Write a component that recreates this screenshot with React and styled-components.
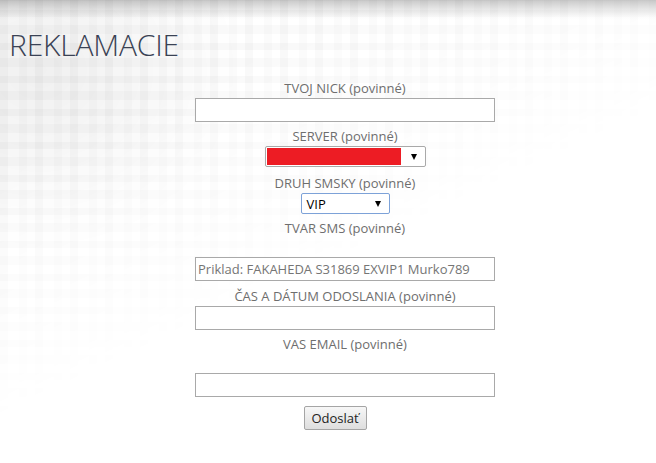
import React from 'react';
import styled, { createGlobalStyle } from 'styled-components';

const GlobalStyle = createGlobalStyle`
  html, body {
    margin: 0;
    padding: 0;
    background: #fff;
  }
  body {
    font-family: "Open Sans", "Liberation Sans", sans-serif;
  }
`;

const Page = styled.div`
  position: relative;
  width: 656px;
  height: 463px;
  overflow: hidden;
  background: linear-gradient(to bottom, #c9c9c9 0px, #e4e4e4 8px, #fbfbfb 16px, #fff 20px);

  /* pixel mosaic in the top left corner */
  &::before {
    content: '';
    position: absolute;
    inset: 0;
    background-image:
      repeating-linear-gradient(90deg, rgba(0, 0, 0, 0.025) 0 8px, rgba(0, 0, 0, 0) 8px 19px, rgba(0, 0, 0, 0.015) 19px 27px, rgba(0, 0, 0, 0) 27px 35px),
      repeating-linear-gradient(0deg, rgba(0, 0, 0, 0.02) 0 9px, rgba(0, 0, 0, 0) 9px 17px, rgba(0, 0, 0, 0.025) 17px 24px, rgba(0, 0, 0, 0) 24px 33px),
      radial-gradient(ellipse 200px 180px at 40px 70px, rgba(0, 0, 0, 0.06), rgba(0, 0, 0, 0));
    -webkit-mask-image: linear-gradient(155deg, #000 22%, transparent 55%);
    mask-image: linear-gradient(155deg, #000 22%, transparent 55%);
    pointer-events: none;
  }
`;

const Content = styled.div`
  position: relative;
  padding-top: 27px;
`;

const Title = styled.h1`
  margin: 0 0 0 9px;
  font-family: "Open Sans", sans-serif;
  font-weight: 300;
  font-size: 30px;
  line-height: 36px;
  color: #3a4254;
  letter-spacing: -0.2px;
`;

const Form = styled.form`
  display: flex;
  flex-direction: column;
  align-items: center;
  padding-left: 34px;
  margin-top: 16px;
`;

const Label = styled.label`
  display: block;
  margin-top: ${(p) => p.$top ?? 5}px;
  padding-bottom: ${(p) => (p.$blank ? 19 : 0)}px;
  font-size: 13px;
  line-height: 19px;
  color: #6e6e6e;
  text-align: center;
`;

const TextInput = styled.input`
  box-sizing: border-box;
  width: 300px;
  height: 24px;
  margin: 0;
  padding: 0 2px;
  border: 1px solid #a9a9a9;
  font-family: "Open Sans", sans-serif;
  font-size: 13px;
  color: #333;
  background: #fff;
  outline: none;

  &::placeholder {
    color: #757575;
  }
`;

const SelectBox = styled.div`
  box-sizing: border-box;
  display: flex;
  align-items: center;
  width: ${(p) => p.$width}px;
  height: 21px;
  padding: 1px;
  border: 1px solid ${(p) => (p.$focused ? '#7da2d8' : '#a9a9a9')};
  border-radius: 2px;
  background: #fff;
  font-size: 13px;
  color: #000;
`;

const SelectValue = styled.div`
  flex: 1;
  align-self: stretch;
  display: flex;
  align-items: center;
  padding-left: 4px;
  background: ${(p) => p.$color || 'transparent'};
  margin-right: ${(p) => (p.$color ? 10 : 0)}px;
`;

const Arrow = styled.span`
  width: 0;
  height: 0;
  margin-right: 7px;
  border-left: 3px solid transparent;
  border-right: 3px solid transparent;
  border-top: 6px solid #000;
`;

const Button = styled.button`
  margin-top: 9px;
  margin-right: 20px;
  width: 63px;
  height: 24px;
  padding: 0;
  border: 1px solid #a5a5a5;
  border-radius: 2px;
  background: linear-gradient(to bottom, #f7f7f7, #dedede);
  font-family: "Open Sans", sans-serif;
  font-size: 13px;
  color: #222;
`;

export default function App() {
  return (
    <Page>
      <GlobalStyle />
      <Content>
        <Title>REKLAMACIE</Title>
        <Form onSubmit={(e) => e.preventDefault()}>
          <Label $top={0}>TVOJ NICK (povinné)</Label>
          <TextInput type="text" />

          <Label>SERVER (povinné)</Label>
          <SelectBox $width={161}>
            <SelectValue $color="#ed1c24" />
            <Arrow />
          </SelectBox>

          <Label $top={7}>DRUH SMSKY (povinné)</Label>
          <SelectBox $width={89} $focused>
            <SelectValue>VIP</SelectValue>
            <Arrow />
          </SelectBox>

          <Label $blank>TVAR SMS (povinné)</Label>
          <TextInput type="text" placeholder="Priklad: FAKAHEDA S31869 EXVIP1 Murko789" />

          <Label $top={6}>ČAS A DÁTUM ODOSLANIA (povinné)</Label>
          <TextInput type="text" />

          <Label $blank>VAS EMAIL (povinné)</Label>
          <TextInput type="email" />

          <Button type="submit">Odoslať</Button>
        </Form>
      </Content>
    </Page>
  );
}
